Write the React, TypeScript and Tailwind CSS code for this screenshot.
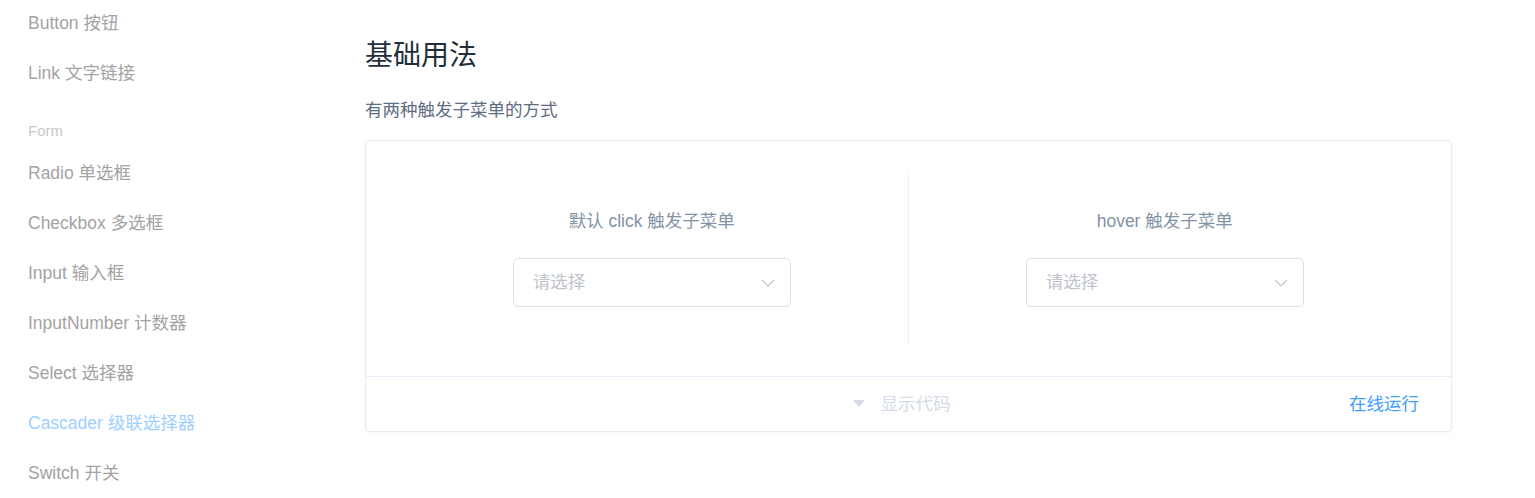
import React from "react";

const font = "font-['Liberation_Sans','Noto_Sans_CJK_SC',sans-serif]";

type NavEntry = { label: string; group?: boolean; active?: boolean };

const nav: NavEntry[] = [
  { label: "Button 按钮" },
  { label: "Link 文字链接" },
  { label: "Form", group: true },
  { label: "Radio 单选框" },
  { label: "Checkbox 多选框" },
  { label: "Input 输入框" },
  { label: "InputNumber 计数器" },
  { label: "Select 选择器" },
  { label: "Cascader 级联选择器", active: true },
  { label: "Switch 开关" },
];

function Chevron() {
  return (
    <svg width="14" height="8" viewBox="0 0 14 8" fill="none">
      <polyline points="1,1 7,7 13,1" stroke="#c0c4cc" strokeWidth="1.2" />
    </svg>
  );
}

function CascaderBox() {
  return (
    <div className="mx-auto flex h-[49px] w-[278px] items-center justify-between rounded-[5px] border border-[#dcdfe6] bg-white pl-[19px] pr-[15px]">
      <span className="text-[17.5px] text-[#c0c4cc]">请选择</span>
      <Chevron />
    </div>
  );
}

function Block({ title, divider }: { title: string; divider?: boolean }) {
  return (
    <div className={`pb-[38px] pt-[37px] text-center ${divider ? "border-r border-[#eff2f6]" : ""}`}>
      <span className="mb-[24px] block text-[17.5px] leading-[26px] text-[#8492a6]">{title}</span>
      <CascaderBox />
    </div>
  );
}

export default function App() {
  return (
    <div className={`flex h-[498px] overflow-hidden bg-white ${font}`}>
      <aside className="w-[365px] shrink-0 pl-[28px]">
        <ul className="-mt-[2px]">
          {nav.map((item, i) =>
            item.group ? (
              <li key={i} className="h-[50px] pt-[24px] text-[15px] leading-[18px] text-[#c8c8c8]">
                {item.label}
              </li>
            ) : (
              <li
                key={i}
                className={`h-[50px] text-[17.5px] leading-[50px] ${item.active ? "text-[#a0cfff]" : "text-[#a3a3a3]"}`}
              >
                {item.label}
              </li>
            ),
          )}
        </ul>
      </aside>

      <main className="w-[1087px] shrink-0">
        <h3 className="mt-[38px] text-[28px] leading-[36px] text-[#1f2f3d]">基础用法</h3>
        <p className="mt-[24px] text-[17.5px] leading-[24px] text-[#5e6d82]">有两种触发子菜单的方式</p>

        <div className="mt-[18px] rounded-[4px] border border-[#ebebeb] shadow-[0_2px_6px_rgba(0,0,0,0.03)]">
          <div className="grid grid-cols-2 px-[30px] pt-[30px] pb-[31px]">
            <Block title="默认 click 触发子菜单" divider />
            <Block title="hover 触发子菜单" />
          </div>
          <div className="grid h-[55px] grid-cols-[1fr_auto_1fr] items-center border-t border-[#eaeefb] px-[32px] text-[17.5px]">
            <span />
            <div className="mr-[14px] flex items-center gap-[16px] text-[#d3dce6]">
              <svg width="12" height="8" viewBox="0 0 12 8">
                <polygon points="0,0 12,0 6,7" fill="#d3dce6" />
              </svg>
              <span>显示代码</span>
            </div>
            <span className="justify-self-end text-[#409eff]">在线运行</span>
          </div>
        </div>
      </main>
    </div>
  );
}
